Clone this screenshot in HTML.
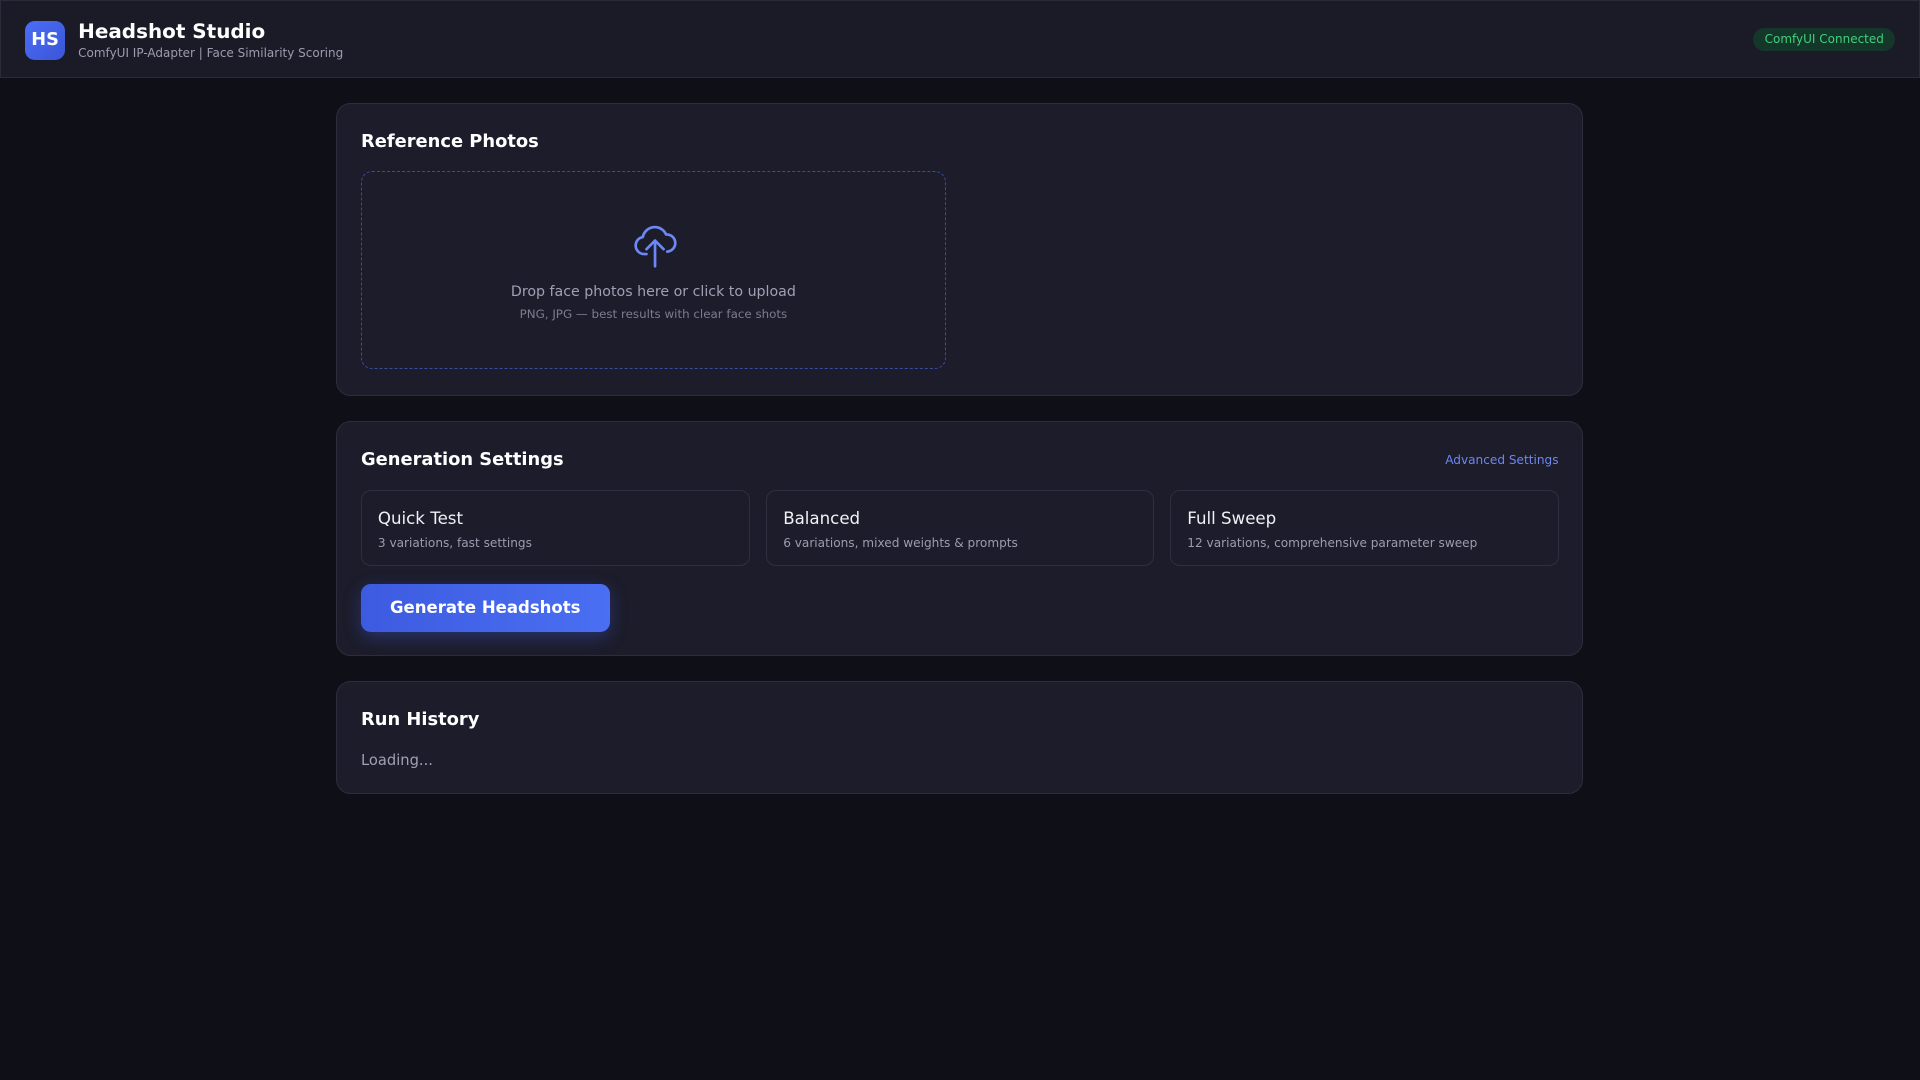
<!DOCTYPE html>
<html><head><meta charset="utf-8"><style>
html,body{margin:0;padding:0;background:#0f0f17;}
body{width:1568px;height:882px;zoom:1.22449;font-family:"DejaVu Sans","Liberation Sans",sans-serif;color:#e8e8f0;overflow:hidden;position:relative}
.hdr{position:absolute;left:0;top:0;width:1566px;height:62px;background:#1b1b28;border:1px solid #2a2a3a;}
.logo{position:absolute;left:20px;top:16px;width:32px;height:32px;border-radius:8px;background:linear-gradient(135deg,#4b6ef5,#3a55d8);color:#fff;font-weight:bold;font-size:14.5px;text-align:center;line-height:32px}
.t1{position:absolute;left:63px;top:15px;font-size:16.3px;font-weight:bold;color:#fff}
.t2{position:absolute;left:63px;top:37px;font-size:9.8px;color:#9c9cb0}
.badge{position:absolute;left:1431px;top:22px;width:116px;height:19px;border-radius:10px;background:#15372a;color:#3fcf7c;font-size:9.8px;text-align:center;line-height:19px}
.card{position:absolute;left:274px;width:1017px;background:#1c1c2a;border:1px solid #2d2d3d;border-radius:12px}
.ct{position:absolute;left:20px;font-size:14.6px;font-weight:bold;color:#fff}
.drop{position:absolute;left:20px;top:55px;width:476px;height:160px;border:1.6px dashed #3b4c9e;border-radius:9px}
.opt{position:absolute;top:55px;height:61px;border:1px solid #2f2f40;border-radius:8px}
.opt b{position:absolute;left:13px;top:15px;font-weight:normal;font-size:13.6px;color:#f0f0f5}
.opt span{position:absolute;left:13px;top:37px;font-size:9.9px;color:#9c9cb0;white-space:nowrap}
.btn{position:absolute;left:20px;top:131px;width:203px;height:39px;border-radius:8px;background:linear-gradient(90deg,#3d5be0,#4a6ff2);color:#fff;font-weight:bold;font-size:13.5px;text-align:center;line-height:39px;box-shadow:0 4px 14px rgba(67,97,238,.35)}
</style></head><body>
<div class="hdr">
<div class="logo">HS</div>
<div class="t1">Headshot Studio</div>
<div class="t2">ComfyUI IP-Adapter | Face Similarity Scoring</div>
<div class="badge">ComfyUI Connected</div>
</div>

<div class="card" style="top:84px;height:238px">
<div class="ct" style="top:22px">Reference Photos</div>
<div class="drop">
<svg style="position:absolute;left:221px;top:40px" width="36" height="38" viewBox="0 0 36 38" fill="none" stroke="#6d87f5" stroke-width="2.2" stroke-linecap="round" stroke-linejoin="round"><path d="M11 27H9a7 7 0 0 1-1-13.9A10 10 0 0 1 27 11a7 7 0 0 1 1 14"/><path d="M18 37V17M11 23l7-7 7 7"/></svg>
<div style="position:absolute;left:0;right:0;top:91px;text-align:center;font-size:11.6px;color:#a0a0b4">Drop face photos here or click to upload</div>
<div style="position:absolute;left:0;right:0;top:110px;text-align:center;font-size:9.7px;color:#7c7c90">PNG, JPG — best results with clear face shots</div>
</div>
</div>

<div class="card" style="top:344px;height:190px">
<div class="ct" style="top:22px">Generation Settings</div>
<div style="position:absolute;right:19px;top:25px;font-size:9.9px;color:#6d86f0">Advanced Settings</div>
<div class="opt" style="left:20px;width:316px"><b>Quick Test</b><span>3 variations, fast settings</span></div>
<div class="opt" style="left:351px;width:315px"><b>Balanced</b><span>6 variations, mixed weights &amp; prompts</span></div>
<div class="opt" style="left:681px;width:316px"><b>Full Sweep</b><span>12 variations, comprehensive parameter sweep</span></div>
<div class="btn" style="top:132px">Generate Headshots</div>
</div>

<div class="card" style="top:556px;height:91px">
<div class="ct" style="top:22px">Run History</div>
<div style="position:absolute;left:20px;top:57px;font-size:12px;color:#a0a0b4">Loading...</div>
</div>
</body></html>
